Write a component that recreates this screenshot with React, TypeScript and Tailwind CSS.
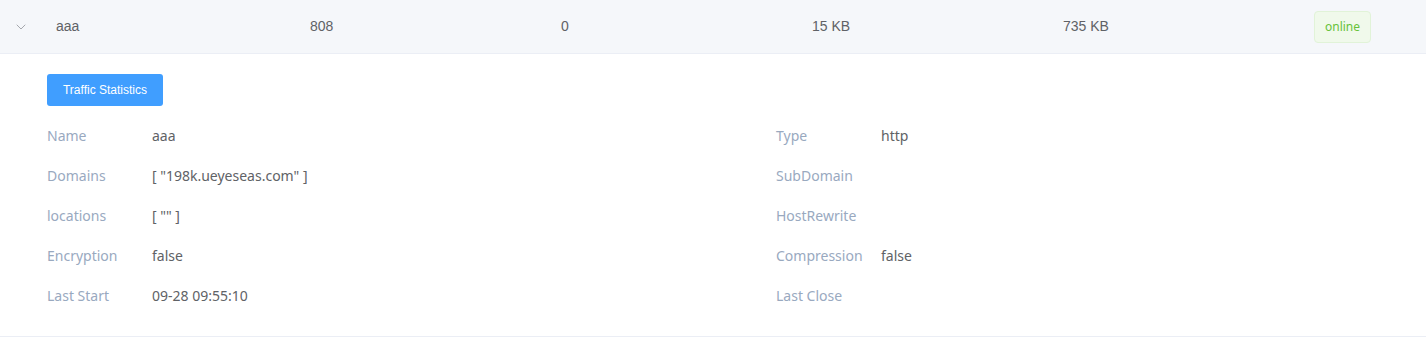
import { ChevronDown } from "lucide-react";

const cols = ["808", "0", "15 KB", "735 KB"];

const left = [
  ["Name", "aaa"],
  ["Domains", '[ "198k.ueyeseas.com" ]'],
  ["locations", '[ "" ]'],
  ["Encryption", "false"],
  ["Last Start", "09-28 09:55:10"],
];

const right = [
  ["Type", "http"],
  ["SubDomain", ""],
  ["HostRewrite", ""],
  ["Compression", "false"],
  ["Last Close", ""],
];

function Field({ label, value }: { label: string; value: string }) {
  return (
    <div className="flex h-10 items-center">
      <span className="w-[105px] text-[#99a9bf]">{label}</span>
      <span className="text-[#606266]">{value}</span>
    </div>
  );
}

export default function App() {
  return (
    <div className="w-[1426px] h-[338px] bg-white text-[14px] font-['Liberation_Sans','Noto_Sans',sans-serif]">
      <div className="flex h-[54px] items-center border-b border-[#ebeef5] bg-[#f5f7fa] text-[#606266]">
        <div className="flex w-[42px] justify-center">
          <ChevronDown className="h-4 w-4 text-[#909399]" strokeWidth={1.2} />
        </div>
        <div className="w-[258px] pl-[14px]">aaa</div>
        {cols.map((c) => (
          <div key={c} className="w-[251px] pl-[10px]">
            {c}
          </div>
        ))}
        <div className="pl-[10px]">
          <span className="flex h-8 items-center rounded-[4px] border border-[#e1f3d8] bg-[#f0f9eb] px-[10px] font-['Noto_Sans',sans-serif] text-[12px] text-[#67c23a]">
            online
          </span>
        </div>
      </div>
      <div className="border-b border-[#ebeef5] pb-[21px] pl-[47px] pt-[20px] font-['Noto_Sans',sans-serif]">
        <button className="h-8 w-[116px] rounded-[3px] bg-[#409eff] font-['Liberation_Sans',sans-serif] text-[12px] text-white">
          Traffic Statistics
        </button>
        <div className="mt-[9px] grid grid-cols-[729px_1fr]">
          <div>
            {left.map(([l, v]) => (
              <Field key={l} label={l} value={v} />
            ))}
          </div>
          <div>
            {right.map(([l, v]) => (
              <Field key={l} label={l} value={v} />
            ))}
          </div>
        </div>
      </div>
    </div>
  );
}
